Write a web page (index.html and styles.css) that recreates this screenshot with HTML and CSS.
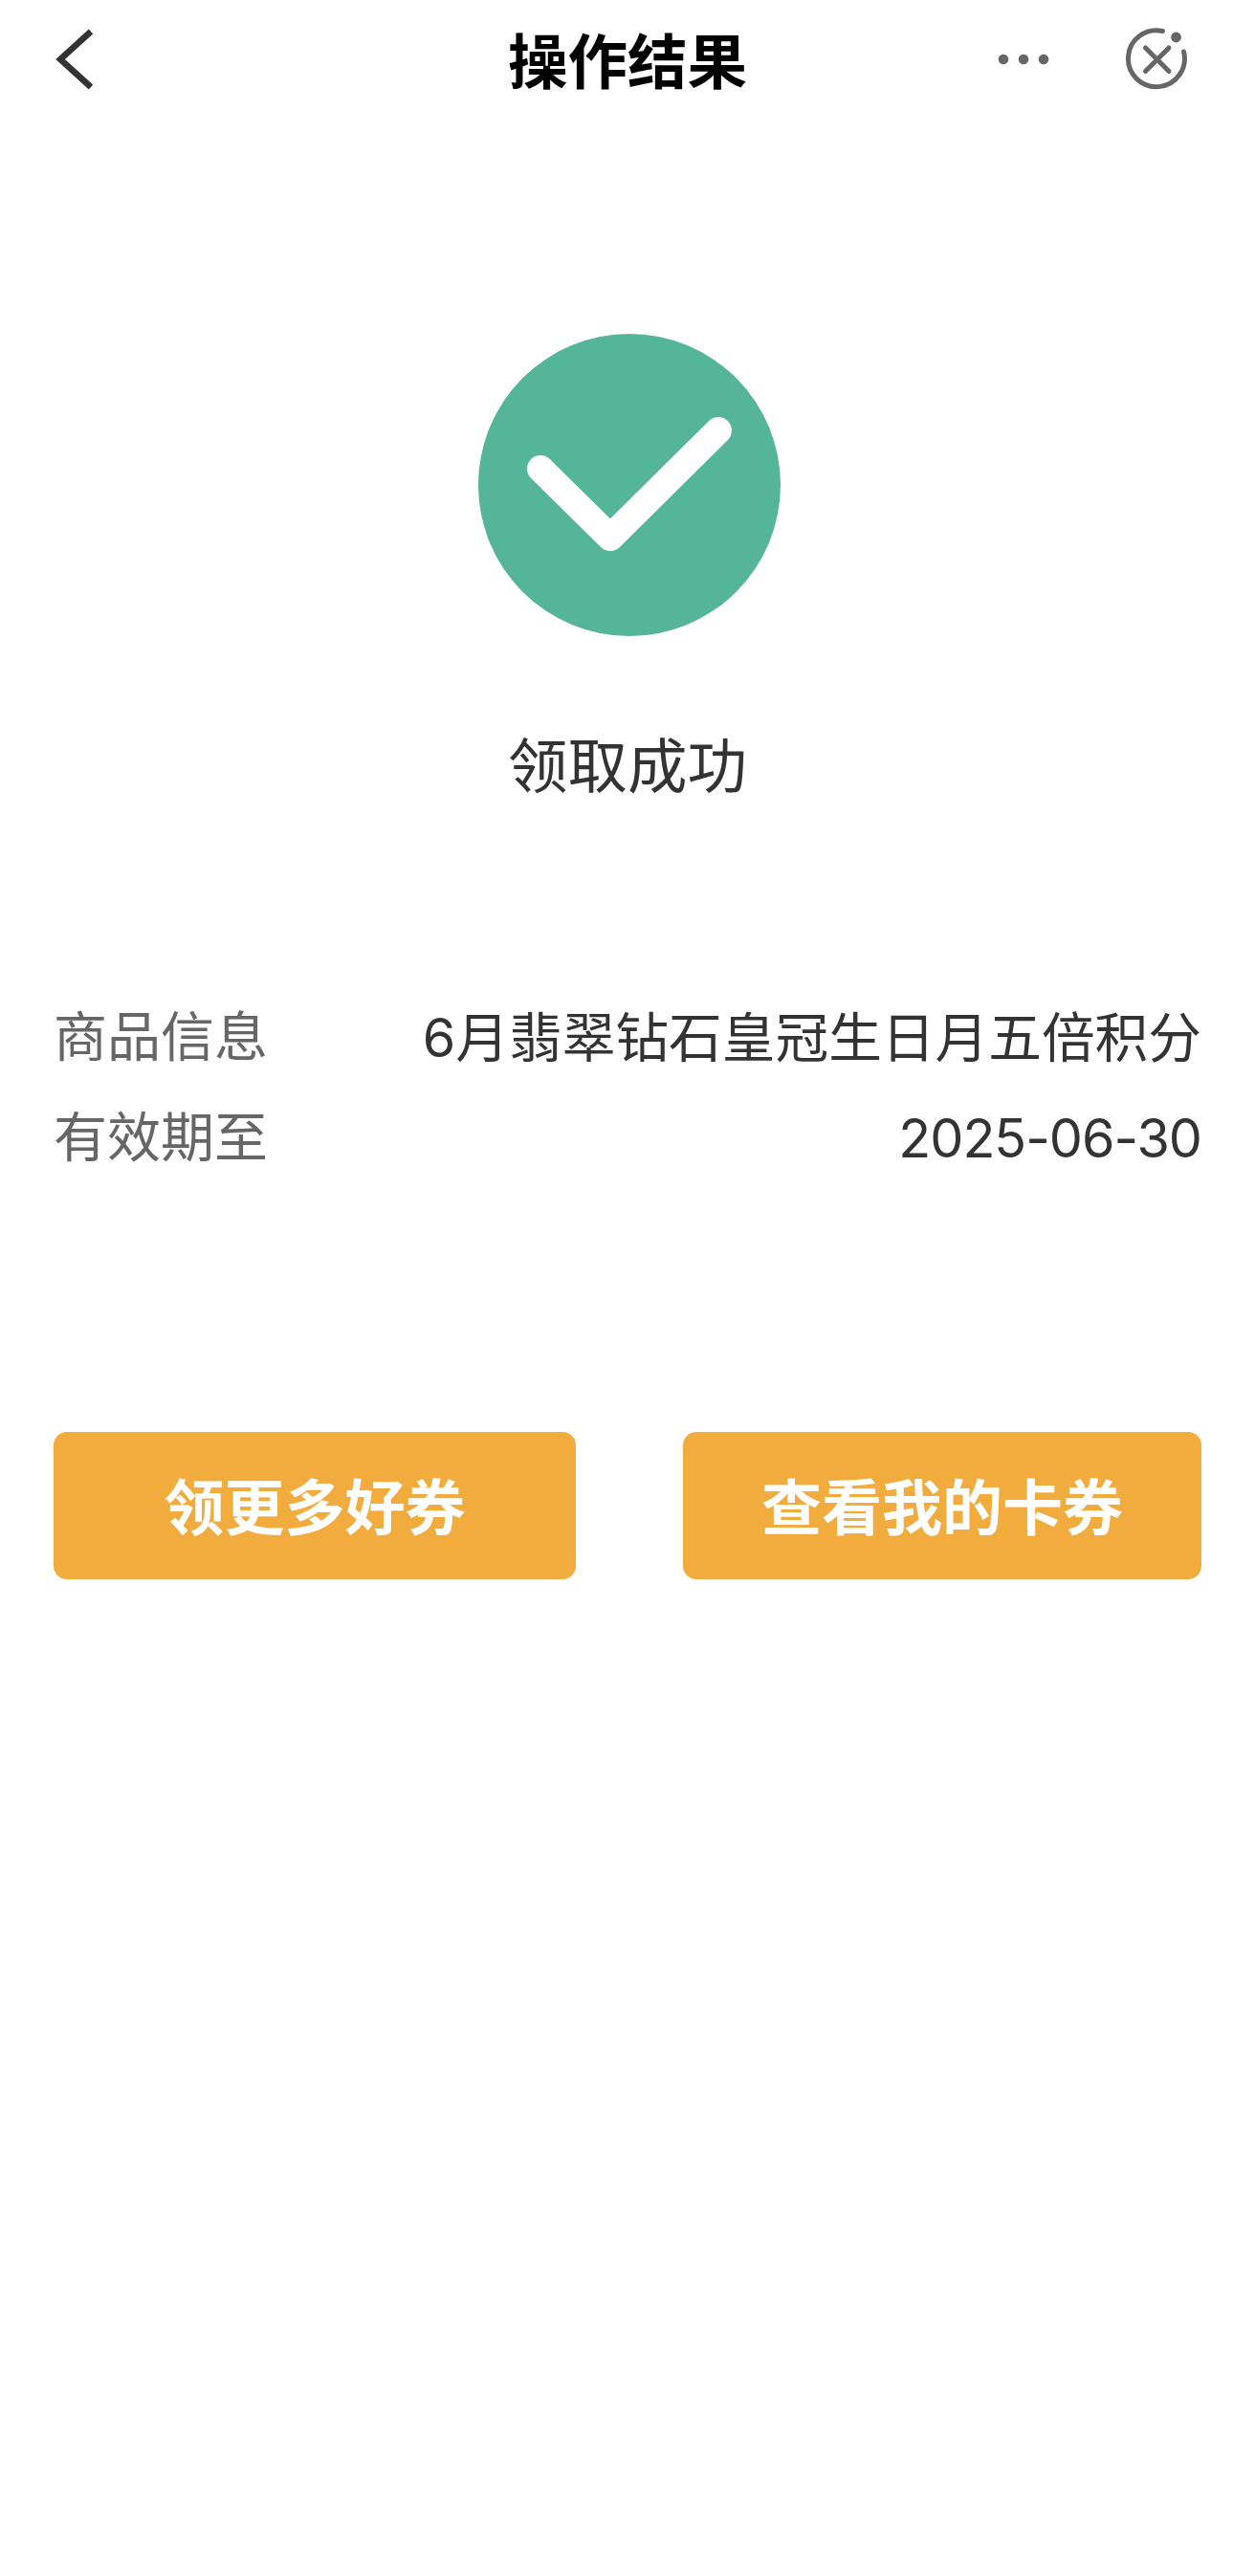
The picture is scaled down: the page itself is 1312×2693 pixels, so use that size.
FILE: index.html
```html
<!DOCTYPE html>
<html lang="zh-CN">
<head>
  <meta charset="UTF-8" />
  <meta name="viewport" content="width=device-width, initial-scale=1" />
  <title>操作结果</title>
  <link rel="stylesheet" href="styles.css">
</head>
<body>
  <header class="nav">
    <div class="nav-left">
      <svg class="icon-back" width="46" height="70" viewBox="0 0 46 70">
        <path d="M41 6 L9 35 L41 64" fill="none" stroke="#333" stroke-width="6.5"/>
      </svg>
    </div>
    <h1 class="nav-title">操作结果</h1>
    <div class="nav-right">
      <svg class="icon-more" width="60" height="20" viewBox="0 0 60 20">
        <circle cx="9" cy="10" r="5.3" fill="#666"/>
        <circle cx="30" cy="10" r="5.3" fill="#666"/>
        <circle cx="51" cy="10" r="5.3" fill="#666"/>
      </svg>
      <svg class="icon-close" width="70" height="70" viewBox="0 0 70 70">
        <path d="M41.5 5.500 A29.500 29.500 0 1 0 63.500 27" fill="none" stroke="#666" stroke-width="5" stroke-linecap="round"/>
        <circle cx="55.500" cy="12" r="5.400" fill="#666"/>
        <path d="M23.500 23 L48 47.500 M48 23 L23.500 47.500" fill="none" stroke="#666" stroke-width="5" stroke-linecap="round"/>
      </svg>
    </div>
  </header>

  <section class="status">
    <svg class="status-icon" width="316" height="316" viewBox="0 0 316 316">
      <circle cx="158" cy="158" r="158" fill="#55b599"/>
      <path d="M65 141 L138 213 L251 101" fill="none" stroke="#fff" stroke-width="28" stroke-linecap="round" stroke-linejoin="round"/>
    </svg>
    <p class="status-text">领取成功</p>
  </section>

  <section class="info">
    <div class="info-row">
      <span class="info-label">商品信息</span>
      <span class="info-value">6月翡翠钻石皇冠生日月五倍积分</span>
    </div>
    <div class="info-row">
      <span class="info-label">有效期至</span>
      <span class="info-value info-date">2025-06-30</span>
    </div>
  </section>

  <div class="actions">
    <button class="btn btn-more" type="button">领更多好券</button>
    <button class="btn btn-mine" type="button">查看我的卡券</button>
  </div>
</body>
</html>
```

FILE: styles.css
```css
html, body {
  margin: 0;
  padding: 0;
  background: #fff;
}
body {
  font-family: "Noto Sans CJK SC", "Noto Sans", sans-serif;
  color: #333;
}

/* top bar */
.nav {
  display: grid;
  grid-template-columns: 1fr auto 1fr;
  align-items: center;
  height: 124px;
  padding: 0 68px;
}
.nav-left,
.nav-right {
  display: flex;
  align-items: center;
}
.nav-left {
  margin-left: -14px;
}
.nav-right {
  justify-content: flex-end;
  gap: 74px;
}
.nav-title {
  margin: 0;
  padding-bottom: 3px;
  font-size: 62.5px;
  line-height: 121px;
  font-weight: 700;
  color: #000;
}
.nav svg {
  display: block;
}

/* result icon and message */
.status {
  display: flex;
  flex-direction: column;
  align-items: center;
  padding-top: 225px;
}
.status-icon {
  display: block;
  margin-left: 4px;
}
.status-text {
  margin: 87px 0 0;
  font-size: 62.5px;
  line-height: 90px;
}

/* detail rows */
.info {
  margin-top: 185px;
  padding: 0 56px;
}
.info-row {
  display: flex;
  justify-content: space-between;
  font-size: 56px;
  line-height: 105px;
}
.info-label {
  color: #666;
}
.info-value {
  padding-top: 10px;
  font-family: "Inter", "Noto Sans CJK SC", sans-serif;
  font-size: 55.7px;
  line-height: 95px;
}
.info-date {
  letter-spacing: -1px;
}

/* bottom buttons */
.actions {
  display: flex;
  justify-content: space-between;
  margin-top: 260px;
  padding: 0 56px;
}
.btn {
  height: 154px;
  border: none;
  border-radius: 14px;
  padding: 0 0 6px;
  background: #f2ac3e;
  color: #fff;
  font-family: inherit;
  font-size: 63px;
  font-weight: 700;
}
.btn-more {
  width: 546px;
}
.btn-mine {
  width: 542px;
}
```
